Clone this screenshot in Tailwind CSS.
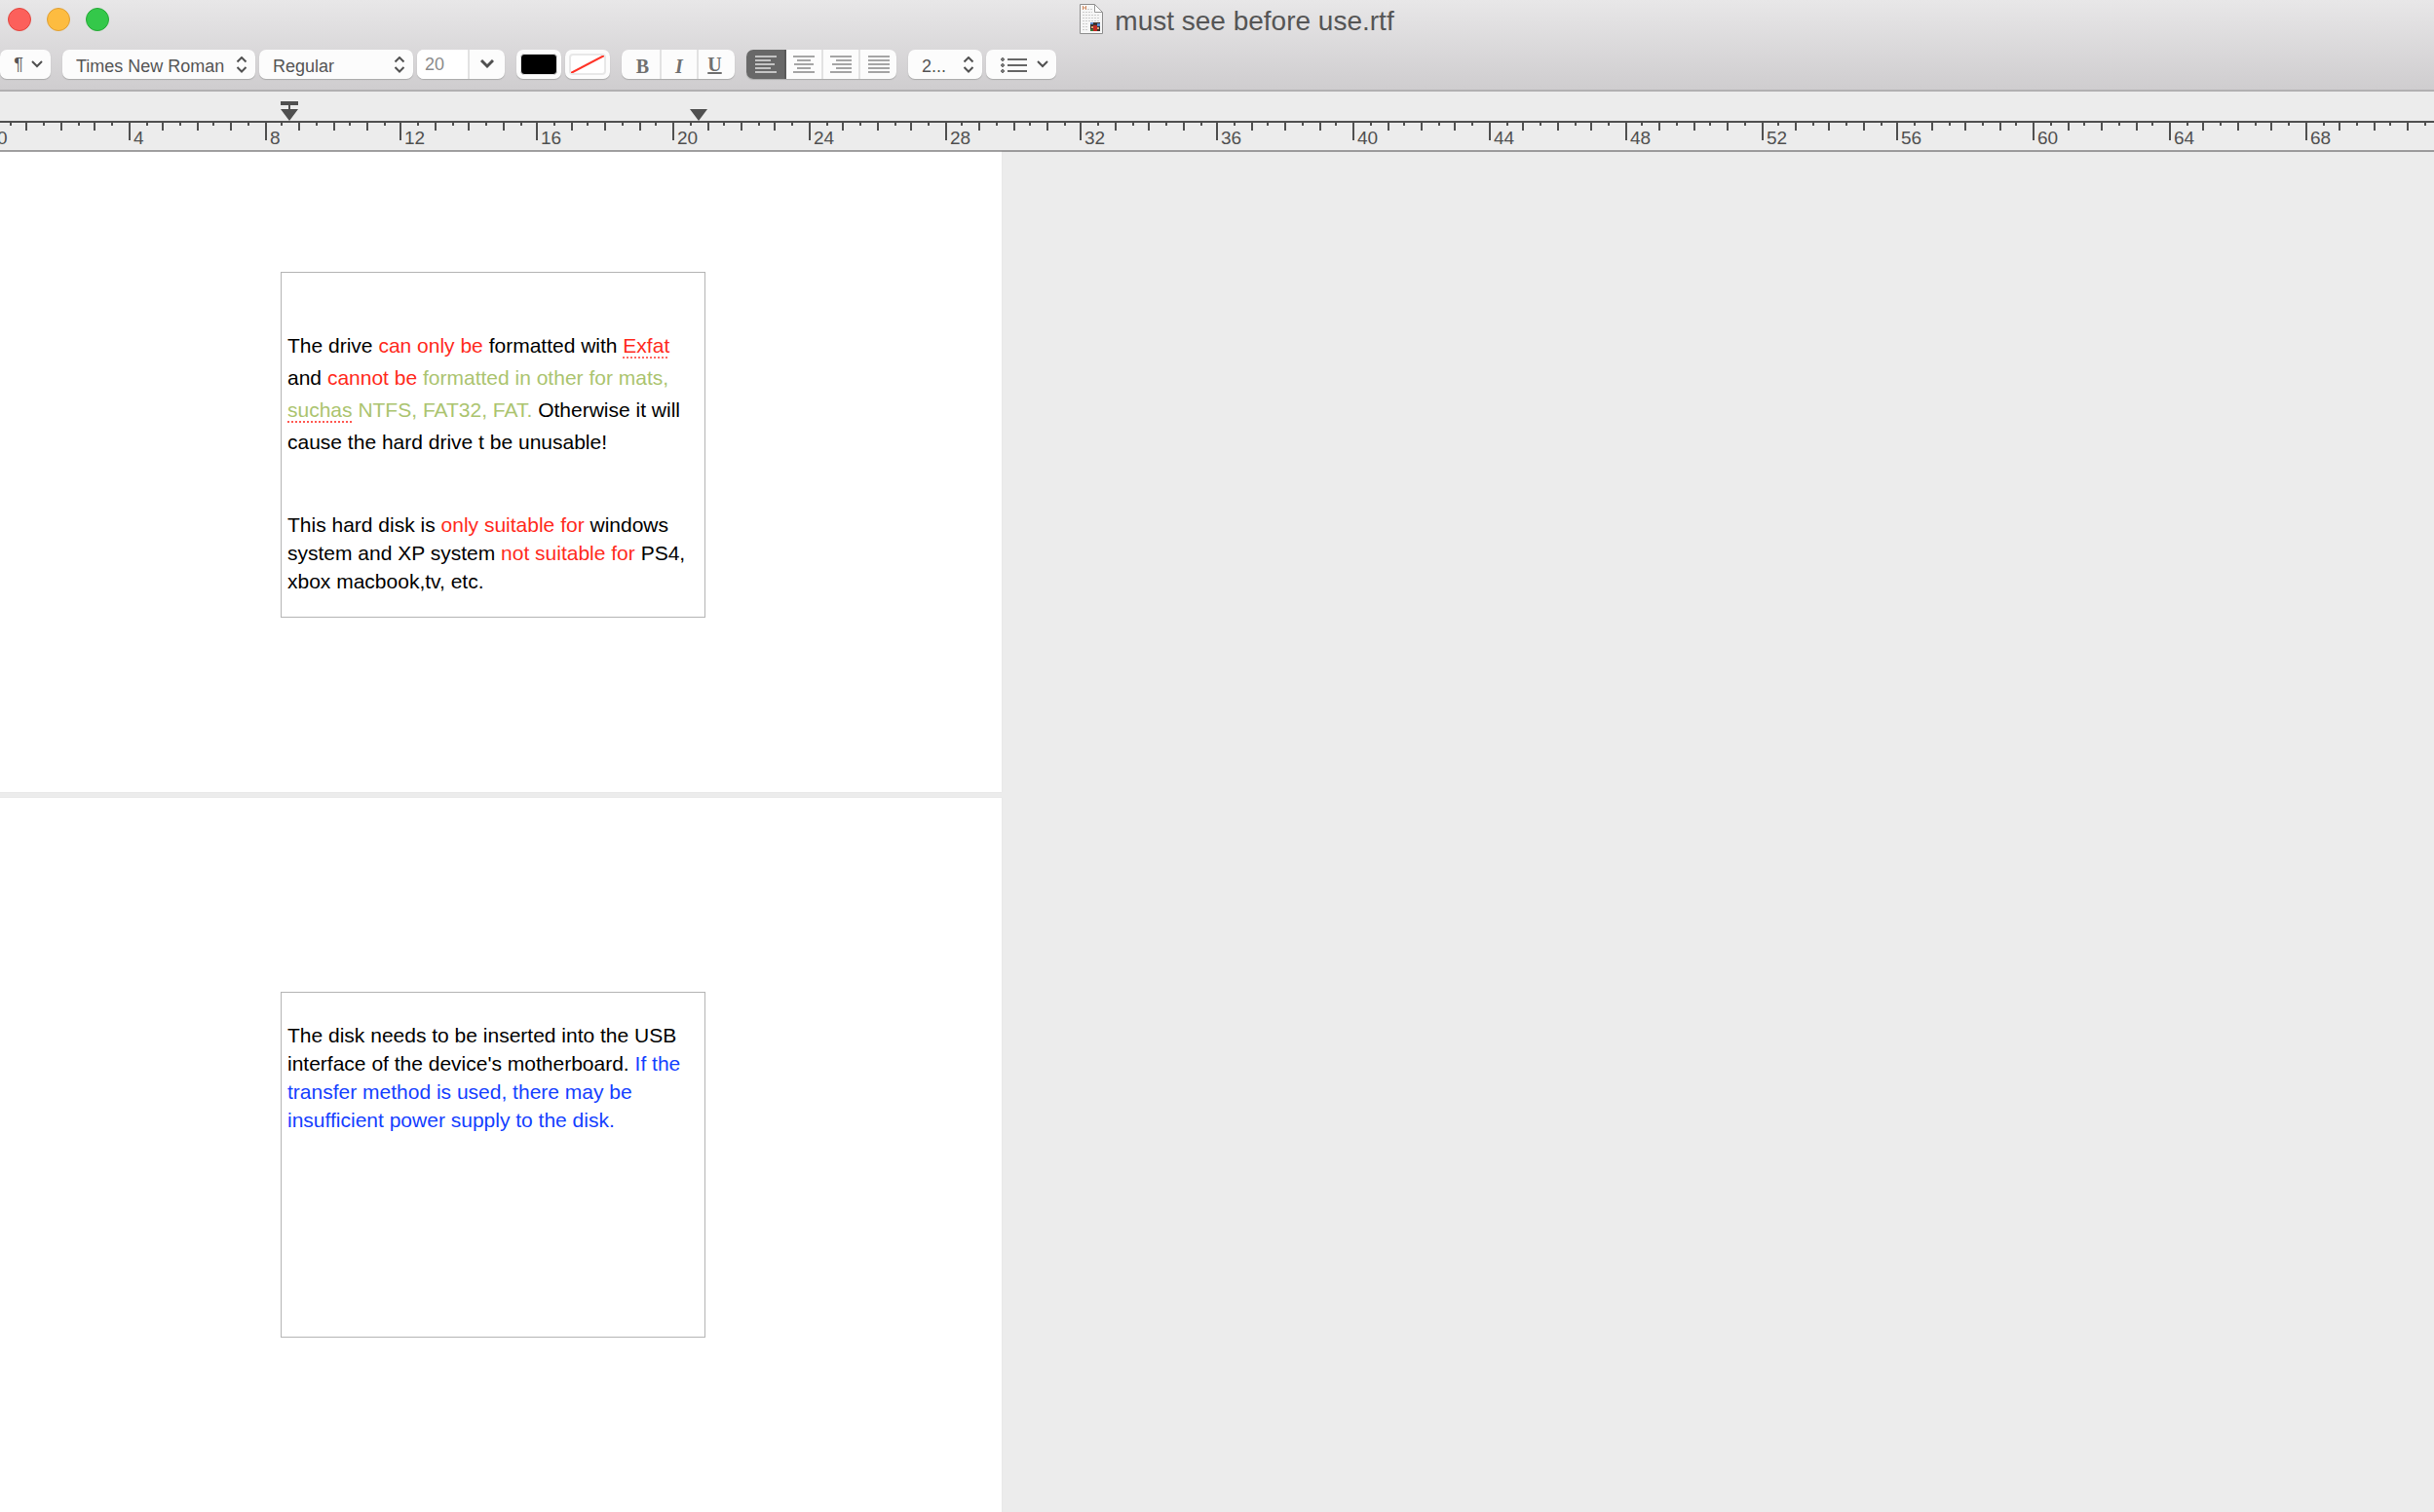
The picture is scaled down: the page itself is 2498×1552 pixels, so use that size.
<!DOCTYPE html>
<html lang="en">
<head>
    <meta charset="UTF-8">
    <meta name="viewport" content="width=device-width, initial-scale=1.0">
    <title>must see before use.rtf</title>
    <script src="https://cdn.jsdelivr.net/npm/@tailwindcss/browser@4"></script>
</head>
<body class="min-h-screen flex flex-col overflow-x-hidden bg-[#ececec] font-['Liberation_Sans',Arial,sans-serif] text-[#555]">

    <header class="bg-linear-to-b from-[#e8e7e8] to-[#cfcdcf] border-b-2 border-[#b1b0b1]">
        <!-- Title bar -->
        <div class="flex items-center h-10 pl-2 pr-[71px]">
            <div class="flex gap-4">
                <button aria-label="Close" class="size-6 rounded-full bg-[#fc605b] border border-[#e2463f]"></button>
                <button aria-label="Minimize" class="size-6 rounded-full bg-[#fdbc40] border border-[#df9f34]"></button>
                <button aria-label="Zoom" class="size-6 rounded-full bg-[#34c84a] border border-[#27a937]"></button>
            </div>
            <h1 class="flex-1 flex items-center justify-center gap-3 text-[28px] leading-8">
                <svg width="24" height="32" viewBox="0 0 24 32">
                    <path d="M.5 .5h15l8 8v22H.5z" fill="#f6f6f6" stroke="#8e8e8e"/>
                    <path d="M15.500 .5v8h8z" fill="#fff" stroke="#999"/>
                    <path d="M3.500 2v4M6.500 2v4M3 4h4" stroke="#d08a60"/>
                    <path d="M8 5.500h5M3 8.500h10M3 11.500h17M3 14.500h17M3 17.500h17M3 20.500h6M3 23.500h6M3 26.500h6" stroke="#ccc" stroke-dasharray="2 1"/>
                    <path d="M11 19h10v9h-10z" fill="#3c3430"/>
                    <path d="M11 19h3v2h-3zM18 20h3v3h-3z" fill="#5b8fd0"/>
                    <path d="M14 22h4v6h-4z" fill="#c02a22"/>
                    <path d="M12 23h2v2h-2zM18 24h2v2h-2z" fill="#d9a56e"/>
                    <path d="M11 26h3v2h-3z" fill="#3d7a3a"/>
                </svg>
                <span class="pt-[3px]">must see before use.rtf</span>
            </h1>
        </div>

        <!-- Formatting toolbar -->
        <div class="flex pt-[11px] pb-[11px] text-[18px] leading-[30px]">
            <button aria-label="Paragraph styles" class="flex items-center justify-end gap-2 w-[52px] h-[30px] pr-2 mr-3 rounded-[7px] bg-[#fcfcfc] shadow-[0_1px_1px_#aaa]">
                <span>¶</span>
                <svg width="12" height="8" viewBox="0 0 12 8" fill="none" stroke="#505050" stroke-width="2"><path d="M1 1l5 5 5-5"/></svg>
            </button>

            <div class="relative w-[198px] h-[30px] mr-1">
                <select aria-label="Font family" class="appearance-none w-full h-full pl-3.5 pt-0.5 rounded-[7px] bg-[#fcfcfc] shadow-[0_1px_1px_#aaa]"><option>Times New Roman</option></select>
                <svg class="absolute right-2 top-[7px] pointer-events-none" width="12" height="17" viewBox="0 0 12 17" fill="none" stroke="#505050" stroke-width="2"><path d="M1.500 5.500L6 1l4.500 4.500M1.500 11L6 15.500l4.500-4.500"/></svg>
            </div>

            <div class="relative w-[158px] h-[30px] mr-1">
                <select aria-label="Typeface" class="appearance-none w-full h-full pl-3.5 pt-0.5 rounded-[7px] bg-[#fcfcfc] shadow-[0_1px_1px_#aaa]"><option>Regular</option></select>
                <svg class="absolute right-2 top-[7px] pointer-events-none" width="12" height="17" viewBox="0 0 12 17" fill="none" stroke="#505050" stroke-width="2"><path d="M1.500 5.500L6 1l4.500 4.500M1.500 11L6 15.500l4.500-4.500"/></svg>
            </div>

            <div class="flex w-[90px] h-[30px] mr-3 rounded-[7px] overflow-hidden bg-[#fcfcfc] shadow-[0_1px_1px_#aaa]">
                <input aria-label="Font size" type="text" value="20" class="w-[54px] h-[30px] pl-2 bg-white border-r-2 border-[#e2e2e2] text-[#8a8a8a]">
                <button aria-label="Choose size" class="flex-1 flex items-center justify-center">
                    <svg width="14" height="10" viewBox="0 0 14 10" fill="none" stroke="#505050" stroke-width="3"><path d="M1 1l6 6 6-6"/></svg>
                </button>
            </div>

            <button aria-label="Text color" class="w-[46px] h-[30px] p-1 mr-1 rounded-[7px] bg-[#fcfcfc] shadow-[0_1px_1px_#aaa]">
                <span class="block h-[22px] rounded-[4px] bg-black border border-[#e4e4e4]"></span>
            </button>
            <button aria-label="Background color" class="w-[46px] h-[30px] p-1 mr-3 rounded-[7px] bg-[#fcfcfc] shadow-[0_1px_1px_#aaa]">
                <span class="block h-[22px] rounded-[4px] bg-white border-2 border-[#e8e8e8]">
                    <svg class="block" width="34" height="18" viewBox="0 0 34 18"><path d="M0 18L34 0" stroke="#ff3226" stroke-width="2"/></svg>
                </span>
            </button>

            <div class="flex w-[116px] h-[30px] mr-3 rounded-[7px] overflow-hidden bg-[#fcfcfc] shadow-[0_1px_1px_#aaa] font-['Liberation_Serif',serif] text-[20px] text-[#707070] divide-x-2 divide-[#e2e2e2]">
                <button aria-label="Bold" class="w-[41px] pt-0.5 pl-1 font-bold">B</button>
                <button aria-label="Italic" class="w-[38px] pt-0.5 font-bold italic">I</button>
                <button aria-label="Underline" class="flex-1 pr-1 font-bold underline">U</button>
            </div>

            <div class="flex w-[154px] h-[30px] mr-3 rounded-[7px] overflow-hidden bg-[#fcfcfc] shadow-[0_1px_1px_#aaa] divide-x-2 divide-[#e2e2e2]">
                <button aria-label="Align left" class="w-[41px] flex items-center justify-center bg-[#686868] border-[#5a5a5a]">
                    <svg width="22" height="18" viewBox="0 0 22 18" stroke="#c4c4c4" stroke-width="2"><path d="M0 1h22M0 5h16M0 9h20M0 13h16M0 17h22"/></svg>
                </button>
                <button aria-label="Center" class="w-[38px] flex items-center justify-center">
                    <svg width="22" height="18" viewBox="0 0 22 18" stroke="#a5a5a5" stroke-width="2"><path d="M0 1h22M4 5h14M1 9h20M4 13h14M0 17h22"/></svg>
                </button>
                <button aria-label="Align right" class="w-[38px] flex items-center justify-center">
                    <svg width="22" height="18" viewBox="0 0 22 18" stroke="#a5a5a5" stroke-width="2"><path d="M0 1h22M6 5h16M2 9h20M6 13h16M0 17h22"/></svg>
                </button>
                <button aria-label="Justify" class="flex-1 flex items-center justify-center">
                    <svg width="22" height="18" viewBox="0 0 22 18" stroke="#a5a5a5" stroke-width="2"><path d="M0 1h22M0 5h22M0 9h22M0 13h22M0 17h22"/></svg>
                </button>
            </div>

            <div class="relative w-[76px] h-[30px] mr-1">
                <select aria-label="Line spacing" class="appearance-none w-full h-full pl-3.5 pt-0.5 rounded-[7px] bg-[#fcfcfc] shadow-[0_1px_1px_#aaa]"><option>2...</option></select>
                <svg class="absolute right-2 top-[7px] pointer-events-none" width="12" height="17" viewBox="0 0 12 17" fill="none" stroke="#505050" stroke-width="2"><path d="M1.500 5.500L6 1l4.500 4.500M1.500 11L6 15.500l4.500-4.500"/></svg>
            </div>

            <button aria-label="Lists" class="flex items-center justify-end gap-[10px] w-[72px] h-[30px] pr-2 rounded-[7px] bg-[#fcfcfc] shadow-[0_1px_1px_#aaa]">
                <svg width="28" height="18" viewBox="0 0 28 18" stroke="#666" stroke-width="2"><path d="M8 4h20M8 10h20M8 16h20"/><path d="M1 4h4M1 10h4M1 16h4M3 2v4M3 8v4M3 14v4" stroke="#777"/></svg>
                <svg width="12" height="8" viewBox="0 0 12 8" fill="none" stroke="#505050" stroke-width="2"><path d="M1 1l5 5 5-5"/></svg>
            </button>
        </div>
    </header>

    <!-- Ruler, ticks are added by the script below -->
    <div class="border-b-2 border-[#9c9b9c]">
        <svg id="ruler" class="block w-full h-[60px] text-[19px]" fill="#505050">
            <rect y="30" width="100%" height="2"/>
            <path d="M288 10h18v4h-8v4h8l-9 12-9-12h8v-4h-8z"/>
            <path d="M708 18h18l-9 12z"/>
        </svg>
    </div>

    <!-- Pages -->
    <main class="flex-1 flex flex-col gap-[6px] w-[1028px] text-[21px] text-black">
        <section class="bg-white pl-[288px] pt-[123px] pb-[179px] shadow-[0_0_1px_#ddd]">
            <div class="w-[436px] h-[355px] border border-[#b4b4b4] pl-1.5 pt-[58px]">
                <p class="leading-[33px] whitespace-nowrap">
                    The drive <span class="text-[#ff2a1c]">can only be</span> formatted with <span class="text-[#ff2a1c] underline decoration-dotted decoration-2 decoration-[#ff6a62] underline-offset-4">Exfat</span><br>
                    and <span class="text-[#ff2a1c]">cannot be</span> <span class="text-[#abc46f]">formatted in other for mats,</span><br>
                    <span class="text-[#abc46f]"><span class="underline decoration-dotted decoration-2 decoration-[#ff5a52] underline-offset-4">suchas</span> NTFS, FAT32, FAT.</span> Otherwise it will<br>
                    cause the hard drive t be unusable!
                </p>
                <p class="mt-[54px] leading-[29px] whitespace-nowrap">
                    This hard disk is <span class="text-[#ff2a1c]">only suitable for</span> windows<br>
                    system and XP system <span class="text-[#ff2a1c]">not suitable for</span> PS4,<br>
                    xbox macbook,tv, etc.
                </p>
            </div>
        </section>
        <section class="flex-1 bg-white pl-[288px] pt-[199px] pb-[178px] shadow-[0_0_1px_#ddd]">
            <div class="w-[436px] h-[355px] border border-[#b4b4b4] pl-1.5 pt-[29px]">
                <p class="leading-[29px] whitespace-nowrap">
                    The disk needs to be inserted into the USB<br>
                    interface of the device's motherboard. <span class="text-[#1440ff]">If the<br>
                    transfer method is used, there may be<br>
                    insufficient power supply to the disk.</span>
                </p>
            </div>
        </section>
    </main>

    <script>
        const ruler = document.getElementById("ruler");
        const start = -8;
        const step = 17.453; // half a unit
        let marks = "";

        for (let i = 0; start + i * step < window.innerWidth; i++) {
            const x = Math.round((start + i * step) / 2) * 2;
            const h = i % 8 === 0 ? 18 : i % 2 === 0 ? 8 : 3;
            marks += `<rect x="${x}" y="32" width="2" height="${h}"/>`;
            if (i % 8 === 0) marks += `<text x="${x + 5}" y="54">${i / 2}</text>`;
        }
        ruler.insertAdjacentHTML("beforeend", marks);
    </script>

</body>
</html>
